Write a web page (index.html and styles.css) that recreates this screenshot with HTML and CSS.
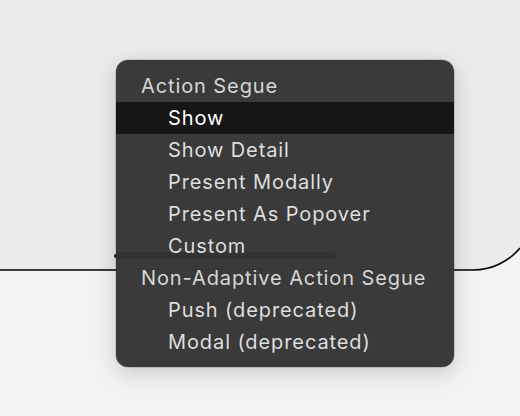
FILE: index.html
```html
<!DOCTYPE html>
<html>
<head>
<meta charset="utf-8">
<link rel="stylesheet" href="styles.css">
</head>
<body>
<div class="canvas">
  <svg class="scene" width="520" height="416" viewBox="0 0 520 416">
    <path d="M-10 -10 H540 V210 L520 248 A61 61 0 0 1 473 270 H-10 Z" fill="#ebebeb"/>
    <path d="M0 270 H473 A61 61 0 0 0 520 248" fill="none" stroke="#000" stroke-width="1.6"/>
    <circle cx="116" cy="256" r="2" fill="#111"/>
  </svg>
  <div class="menu">
    <div class="row header">Action Segue</div>
    <div class="row item selected">Show</div>
    <div class="row item">Show Detail</div>
    <div class="row item">Present Modally</div>
    <div class="row item">Present As Popover</div>
    <div class="row item"><span class="ghost"></span><span class="label">Custom</span></div>
    <div class="row header">Non-Adaptive Action Segue</div>
    <div class="row item">Push (deprecated)</div>
    <div class="row item">Modal (deprecated)</div>
    <div class="seam"></div>
  </div>
</div>
</body>
</html>
```
FILE: styles.css
```css
html, body {
  margin: 0;
  padding: 0;
  background: #f3f3f3;
}
.canvas {
  position: relative;
  width: 520px;
  height: 416px;
  overflow: hidden;
  padding-top: 60px;
  box-sizing: border-box;
}
.scene {
  position: absolute;
  left: 0;
  top: 0;
}
.menu {
  position: relative;
  margin-left: 116px;
  width: 338px;
  box-sizing: border-box;
  padding: 10px 0 9px;
  background: #3a3a3a;
  border-radius: 12px;
  box-shadow: 0 0 0 0.5px rgba(0,0,0,0.25), 0 6px 22px rgba(0,0,0,0.18);
  font-family: Inter, "Liberation Sans", sans-serif;
  font-size: 20px;
  letter-spacing: 0.9px;
  color: #dedede;
}
.row {
  position: relative;
  height: 32px;
  line-height: 33px;
  white-space: nowrap;
}
.header {
  padding-left: 25px;
  color: #d6d6d6;
}
.item {
  padding-left: 52px;
}
.selected {
  background: #161616;
  color: #ffffff;
}
.label {
  position: relative;
}
.ghost {
  position: absolute;
  left: 0;
  top: 22px;
  width: 220px;
  height: 7px;
  border-radius: 0 4px 4px 0;
  background: #333333;
}
.seam {
  position: absolute;
  left: 0;
  right: 0;
  top: 209px;
  height: 1px;
  background: #343434;
}
```
